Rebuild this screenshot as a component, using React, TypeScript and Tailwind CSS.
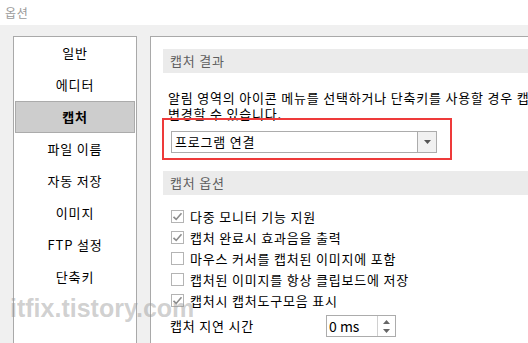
import React from 'react';

const menuItems = ['일반', '에디터', '캡처', '파일 이름', '자동 저장', '이미지', 'FTP 설정', '단축키'];

const options = [
  { label: '다중 모니터 기능 지원', checked: true },
  { label: '캡처 완료시 효과음을 출력', checked: true },
  { label: '마우스 커서를 캡처된 이미지에 포함', checked: false },
  { label: '캡처된 이미지를 항상 클립보드에 저장', checked: false },
  { label: '캡처시 캡처도구모음 표시', checked: true },
];

function CheckBox({ checked }: { checked: boolean }) {
  return (
    <span className="w-[13px] h-[13px] border border-[#b4b4b4] bg-white flex items-center justify-center shrink-0">
      {checked && (
        <svg width="11" height="11" viewBox="0 0 11 11">
          <path d="M1.5 5.8 L4.2 8.4 L9.5 2.2" fill="none" stroke="#8c8c8c" strokeWidth="1.6" />
        </svg>
      )}
    </span>
  );
}

function SectionHeader({ title }: { title: string }) {
  return (
    <div className="h-[24px] bg-[#ebebeb] flex items-center pl-[7px] text-[#5f5f5f]">
      {title}
    </div>
  );
}

export default function App() {
  return (
    <div
      className="relative w-[528px] h-[343px] overflow-hidden bg-[#f0f0f0] text-[13px] leading-[16px] tracking-[0.8px] text-black"
      style={{ fontFamily: '"Noto Sans CJK KR", "Noto Sans", sans-serif' }}
    >
      {/* title bar */}
      <div className="h-[25px] bg-white flex items-center pl-[5px] text-[12px] text-[#9a9a9a]">옵션</div>

      <div className="flex pt-[11px] pl-[13px] h-[318px]">
        {/* left menu */}
        <div className="w-[124px] shrink-0 bg-white border border-[#a9a9a9] border-b-0">
          {menuItems.map((item) => {
            const active = item === '캡처';
            return (
              <div
                key={item}
                className={`h-[32px] flex items-center justify-center ${
                  active ? 'mx-[1px] bg-[#cdcdcd] border border-[#ababab] font-bold' : ''
                }`}
              >
                {item}
              </div>
            );
          })}
        </div>

        {/* right panel */}
        <div className="ml-[13px] flex-1 bg-white border-l border-t border-[#a9a9a9] pt-[12px] pl-[12px]">
          <SectionHeader title="캡처 결과" />

          <p className="mt-[17px] ml-[5px] whitespace-nowrap">
            알림 영역의 아이콘 메뉴를 선택하거나 단축키를 사용할 경우 캡처 결과를
            <br />
            변경할 수 있습니다.
          </p>

          {/* highlighted combobox */}
          <div className="relative mt-[-4px] ml-[-1px] w-[290px] h-[42px] border-2 border-[#ee3a3a] pt-[11px] pl-[7px]">
            <div className="w-[266px] h-[22px] border border-[#acacac] flex bg-white">
              <div className="flex-1 flex items-center pl-[3px]">프로그램 연결</div>
              <div className="w-[19px] border-l border-[#acacac] bg-[#f1f1f1] flex items-center justify-center">
                <svg width="7" height="4" viewBox="0 0 7 4">
                  <path d="M0 0 H7 L3.5 4 Z" fill="#555" />
                </svg>
              </div>
            </div>
          </div>

          <div className="mt-[11px]">
            <SectionHeader title="캡처 옵션" />
          </div>

          <div className="mt-[11px] ml-[8px] flex flex-col">
            {options.map((o) => (
              <div key={o.label} className="h-[21px] flex items-center gap-[6px] whitespace-nowrap">
                <CheckBox checked={o.checked} />
                <span>{o.label}</span>
              </div>
            ))}
          </div>

          <div className="mt-[4px] ml-[7px] flex items-center">
            <span className="w-[156px]">캡처 지연 시간</span>
            <div className="w-[70px] h-[22px] border border-[#acacac] flex bg-white">
              <div className="flex-1 flex items-center pl-[2px] text-[14px] tracking-normal">0 ms</div>
              <div className="w-[18px] border-l border-[#d0d0d0] flex flex-col items-center justify-center gap-[5px]">
                <svg width="7" height="4" viewBox="0 0 7 4">
                  <path d="M0 4 H7 L3.5 0 Z" fill="#666" />
                </svg>
                <svg width="7" height="4" viewBox="0 0 7 4">
                  <path d="M0 0 H7 L3.5 4 Z" fill="#666" />
                </svg>
              </div>
            </div>
          </div>
        </div>
      </div>

      {/* watermark */}
      <div
        className="absolute left-[10px] top-[296px] text-[25px] leading-none font-bold tracking-normal text-[rgba(150,150,150,0.45)] pointer-events-none"
        style={{ fontFamily: '"Liberation Sans", Arial, sans-serif' }}
      >
        itfix.tistory.com
      </div>
    </div>
  );
}
